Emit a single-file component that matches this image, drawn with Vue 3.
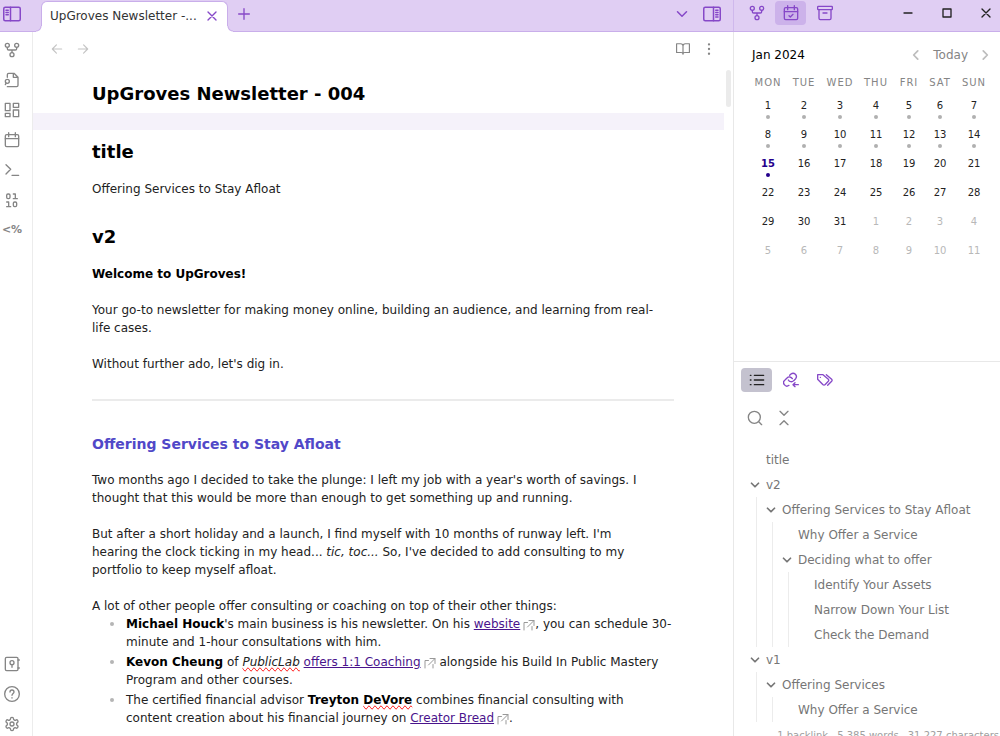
<script setup>
import { h } from 'vue'

const icons = {
  fork: '<circle cx="12" cy="19" r="3"/><circle cx="5" cy="5" r="3"/><circle cx="19" cy="5" r="3"/><path d="M19 8v2a2 2 0 0 1-2 2H7a2 2 0 0 1-2-2V8M12 12v4"/>',
  fileSearch: '<path d="M5 8V4a2 2 0 0 1 2-2h8l6 6v12a2 2 0 0 1-2 2H5M14 2v6h7"/><circle cx="5" cy="14" r="3"/><path d="m2 19 1-2"/>',
  dashboard: '<path d="M2 2h7v11H2zM14 2h8v6h-8zM14 12h8v10h-8zM2 17h7v5H2z"/>',
  calendar: '<rect x="2" y="4" width="20" height="18" rx="2"/><path d="M7 1v6M17 1v6M2 10h20"/>',
  terminal: '<path d="m3 18 7-7-7-7M12 20h10"/>',
  binary: '<rect x="4" y="3" width="5" height="7" rx="2"/><rect x="14" y="15" width="5" height="7" rx="2"/><path d="M4 22h6M14 10h6M4 15h3v7M14 3h3v7"/>',
  vault: '<rect x="2" y="2" width="19" height="20" rx="2"/><circle cx="12" cy="10" r="3"/><path d="M12 13v4M21 6h2M21 18h2"/>',
  help: '<circle cx="12" cy="12" r="11"/><path d="M9 9a3 3 0 0 1 6 0c0 2-3 2.500-3 5M12 17.500v.5"/>',
  settings: '<path d="M12.220 2h-.44a2 2 0 0 0-2 2v.18a2 2 0 0 1-1 1.730l-.43.25a2 2 0 0 1-2 0l-.15-.08a2 2 0 0 0-2.730.73l-.22.38a2 2 0 0 0 .73 2.730l.15.1a2 2 0 0 1 1 1.720v.51a2 2 0 0 1-1 1.740l-.15.09a2 2 0 0 0-.73 2.730l.22.38a2 2 0 0 0 2.730.73l.15-.08a2 2 0 0 1 2 0l.43.25a2 2 0 0 1 1 1.730V20a2 2 0 0 0 2 2h.44a2 2 0 0 0 2-2v-.18a2 2 0 0 1 1-1.730l.43-.25a2 2 0 0 1 2 0l.15.08a2 2 0 0 0 2.730-.73l.22-.39a2 2 0 0 0-.73-2.730l-.15-.08a2 2 0 0 1-1-1.740v-.5a2 2 0 0 1 1-1.740l.15-.09a2 2 0 0 0 .73-2.730l-.22-.38a2 2 0 0 0-2.730-.73l-.15.08a2 2 0 0 1-2 0l-.43-.25a2 2 0 0 1-1-1.730V4a2 2 0 0 0-2-2z"/><circle cx="12" cy="12" r="3"/>',
  sidebarLeft: '<rect x="1" y="3" width="22" height="18" rx="2"/><path d="M10 3v18M4 7h3M4 10h3M4 13h3"/>',
  sidebarRight: '<rect x="1" y="3" width="22" height="18" rx="2"/><path d="M14 3v18M17 7h3M17 10h3M17 13h3M17 16h3"/>',
  close: '<path d="M18 6 6 18M6 6l12 12"/>',
  plus: '<path d="M12 4v16M4 12h16"/>',
  down: '<path d="m6 9 6 6 6-6"/>',
  left: '<path d="m15 5-7 7 7 7"/>',
  right: '<path d="m9 5 7 7-7 7"/>',
  calendarCheck: '<rect x="2" y="4" width="20" height="18" rx="2"/><path d="M7 1v6M17 1v6M2 10h20M9 16l2 2 4-4"/>',
  archive: '<rect x="1" y="2" width="22" height="5" rx="1"/><path d="M3 7v13a2 2 0 0 0 2 2h14a2 2 0 0 0 2-2V7M9 12h6"/>',
  back: '<path d="M20 12H4M11 5l-7 7 7 7"/>',
  forward: '<path d="M4 12h16M13 5l7 7-7 7"/>',
  book: '<path d="M1 3h7a4 4 0 0 1 4 4v14a3 3 0 0 0-3-3H1zM23 3h-7a4 4 0 0 0-4 4v14a3 3 0 0 1 3-3h8z"/>',
  more: '<circle cx="12" cy="4" r="1"/><circle cx="12" cy="12" r="1"/><circle cx="12" cy="20" r="1"/>',
  minimize: '<path d="M6 12h12"/>',
  maximize: '<path d="M6 6h12v12H6z"/>',
  list: '<path d="M8 5h14M8 12h14M8 19h14M2 5h1M2 12h1M2 19h1"/>',
  backlink: '<path d="M8 12a5 5 0 0 0 8 1l3-3a5 5 0 0 0-7-7l-2 2"/><path d="M14 10a5 5 0 0 0-8-1l-3 3a5 5 0 0 0 6 8M23 19h-8M18 16l-3 3 3 3"/>',
  tags: '<path d="M1 4v7l8 8a2 2 0 0 0 3 0l5-5a2 2 0 0 0 0-3L9 4zM14 4l8 7a2 2 0 0 1 0 3l-6 6M5 8h.1"/>',
  search: '<circle cx="11" cy="11" r="9"/><path d="m22 22-4-4"/>',
  collapse: '<path d="m6 2 6 6 6-6M6 22l6-6 6 6"/>',
  external: '<path d="M9 7H2v15M18 15v7M12 3h10v10M22 3 9 16"/>',
}

const Icon = (props) => h('svg', {
  viewBox: '0 0 24 24', width: props.size || 16, height: props.size || 16, fill: 'none',
  stroke: 'currentColor', 'stroke-width': props.weight || 2, 'stroke-linecap': 'round',
  'stroke-linejoin': 'round', 'aria-hidden': 'true', innerHTML: icons[props.name],
})
Icon.props = ['name', 'size', 'weight']

const ribbon = [
  ['fork', 'Open graph view'], ['fileSearch', 'Open quick switcher'], ['dashboard', 'Create new canvas'],
  ['calendar', "Open today's daily note"], ['terminal', 'Open command palette'], ['binary', 'Binary'],
]
const ribbonBottom = [['vault', 'Open another vault'], ['help', 'Help'], ['settings', 'Settings']]

const dayNames = ['MON', 'TUE', 'WED', 'THU', 'FRI', 'SAT', 'SUN']
const colWidths = ['c36', 'c36', 'c36', 'c36', 'c30', 'c32', 'c36']
const weeks = Array.from({ length: 6 }, (_, w) => Array.from({ length: 7 }, (_, d) => {
  const n = w * 7 + d + 1
  return { n: n > 31 ? n - 31 : n, other: n > 31, today: n === 15, dot: n <= 15 }
}))

const outline = [
  { t: 'title' },
  { t: 'v2', c: [
    { t: 'Offering Services to Stay Afloat', c: [
      { t: 'Why Offer a Service' },
      { t: 'Deciding what to offer', c: [
        { t: 'Identify Your Assets' }, { t: 'Narrow Down Your List' }, { t: 'Check the Demand' },
      ] },
    ] },
  ] },
  { t: 'v1', c: [{ t: 'Offering Services', c: [{ t: 'Why Offer a Service' }] }] },
]

const Tree = (props) => h('ul', { class: 'tree' }, props.items.map((i) => h('li', [
  h('button', { class: 'node', type: 'button' }, [
    h('span', { class: 'fold' }, i.c ? [h(Icon, { name: 'down', size: 14, weight: 3 })] : []),
    i.t,
  ]),
  i.c ? h(Tree, { items: i.c }) : null,
])))
Tree.props = ['items']
</script>

<template>
  <div class="window">
    <header class="titlebar">
      <div class="bar-main">
        <button class="sidebar-toggle" aria-label="Toggle left sidebar"><Icon name="sidebarLeft" size="18" /></button>
        <div class="tab">
          <span class="tab-title">UpGroves Newsletter -...</span>
          <button aria-label="Close tab"><Icon name="close" size="16" /></button>
        </div>
        <button class="new-tab" aria-label="New tab"><Icon name="plus" /></button>
        <div class="bar-end">
          <button aria-label="Tab list"><Icon name="down" size="18" /></button>
          <button aria-label="Toggle right sidebar"><Icon name="sidebarRight" size="18" /></button>
        </div>
      </div>
      <div class="bar-side">
        <div class="side-tabs">
          <button class="side-tab" aria-label="Graph"><Icon name="fork" /></button>
          <button class="side-tab on" aria-label="Calendar"><Icon name="calendarCheck" /></button>
          <button class="side-tab" aria-label="Archive"><Icon name="archive" /></button>
        </div>
        <div class="controls">
          <button aria-label="Minimize"><Icon name="minimize" /></button>
          <button aria-label="Maximize"><Icon name="maximize" /></button>
          <button aria-label="Close"><Icon name="close" /></button>
        </div>
      </div>
    </header>

    <nav class="ribbon" aria-label="Ribbon">
      <button v-for="r in ribbon" :key="r[0]" :aria-label="r[1]"><Icon :name="r[0]" /></button>
      <button class="templater">&lt;%</button>
      <span class="spacer"></span>
      <button v-for="r in ribbonBottom" :key="r[0]" :aria-label="r[1]"><Icon :name="r[0]" /></button>
    </nav>

    <main class="editor">
      <div class="view-header">
        <button aria-label="Back" class="faint"><Icon name="back" size="14" /></button>
        <button aria-label="Forward" class="faint"><Icon name="forward" size="14" /></button>
        <span class="spacer"></span>
        <button aria-label="Reading view"><Icon name="book" size="14" /></button>
        <button aria-label="More options"><Icon name="more" size="14" /></button>
      </div>
      <article>
        <h1>UpGroves Newsletter - 004</h1>
        <div class="active-line"></div>
        <h2>title</h2>
        <p>Offering Services to Stay Afloat</p>
        <h2 class="later">v2</h2>
        <p><strong>Welcome to UpGroves!</strong></p>
        <p>Your go-to newsletter for making money online, building an audience, and learning from real-<br>life cases.</p>
        <p>Without further ado, let's dig in.</p>
        <hr>
        <h3>Offering Services to Stay Afloat</h3>
        <p>Two months ago I decided to take the plunge: I left my job with a year's worth of savings. I<br>thought that this would be more than enough to get something up and running.</p>
        <p>But after a short holiday and a launch, I find myself with 10 months of runway left. I'm<br>hearing the clock ticking in my head... <em>tic, toc...</em> So, I've decided to add consulting to my<br>portfolio to keep myself afloat.</p>
        <p>A lot of other people offer consulting or coaching on top of their other things:</p>
        <ul class="people">
          <li><strong>Michael Houck</strong>'s main business is his newsletter. On his <a href="#">website</a><Icon name="external" size="12" class="ext" />, you can schedule 30-<wbr>minute and 1-hour consultations with him.</li>
          <li><strong>Kevon Cheung</strong> of <em class="typo">PublicLab</em> <a href="#">offers 1:1 Coaching</a><Icon name="external" size="12" class="ext" /> alongside his Build In Public Mastery Program and other courses.</li>
          <li>The certified financial advisor <strong>Treyton <span class="typo">DeVore</span></strong> combines financial consulting with<br>content creation about his financial journey on <a href="#">Creator Bread</a><Icon name="external" size="12" class="ext" />.</li>
        </ul>
      </article>
      <div class="thumb"></div>
    </main>

    <aside class="side">
      <section class="calendar">
        <div class="month">
          <span class="month-name">Jan 2024</span>
          <button aria-label="Previous month" class="arrow"><Icon name="left" size="14" weight="3" /></button>
          <button class="today-btn">Today</button>
          <button aria-label="Next month" class="arrow"><Icon name="right" size="14" weight="3" /></button>
        </div>
        <table>
          <colgroup><col v-for="(c, i) in colWidths" :key="i" :class="c"></colgroup>
          <thead><tr><th v-for="d in dayNames" :key="d" scope="col">{{ d }}</th></tr></thead>
          <tbody>
            <tr v-for="(w, i) in weeks" :key="i">
              <td v-for="d in w" :key="d.n" :class="{ other: d.other, today: d.today }">
                <span class="num">{{ d.n }}</span><span class="dot" :class="{ shown: d.dot }"></span>
              </td>
            </tr>
          </tbody>
        </table>
      </section>
      <section class="outline">
        <div class="side-tabs">
          <button class="side-tab grey" aria-label="Outline"><Icon name="list" /></button>
          <button class="side-tab" aria-label="Backlinks"><Icon name="backlink" /></button>
          <button class="side-tab" aria-label="Tags"><Icon name="tags" /></button>
        </div>
        <div class="tools">
          <button aria-label="Search"><Icon name="search" /></button>
          <button aria-label="Collapse all"><Icon name="collapse" /></button>
        </div>
        <Tree :items="outline" />
        <div class="thumb"></div>
      </section>
    </aside>
    <footer class="status"><span>1 backlink</span><span>5,385 words</span><span>31,227 characters</span></footer>
  </div>
</template>

<style>
html, body { margin: 0; overflow: hidden; }
</style>

<style scoped>
.window {
  position: relative;
  display: grid;
  grid-template: 32px minmax(0, 1fr) / 33px minmax(0, 1fr) 266px;
  height: 100vh;
  overflow: hidden;
  background: #fff;
  color: #222;
  font: 12px/18px "DejaVu Sans", Verdana, sans-serif;
}
.window :deep(button) {
  display: flex;
  align-items: center;
  justify-content: center;
  padding: 0;
  border: 0;
  background: none;
  color: inherit;
  font: inherit;
}
.window :deep(svg) { flex: none; }
.spacer { flex: 1; }

.titlebar {
  grid-column: 1 / -1;
  display: grid;
  grid-template-columns: minmax(0, 1fr) 267px;
  box-sizing: border-box;
  background: #e0cef3;
  border-bottom: 1px solid #c9aeea;
  color: #8648c8;
}
.bar-main { display: flex; align-items: flex-start; }
.sidebar-toggle { width: 24px; height: 28px; }
.tab {
  position: relative;
  align-self: flex-end;
  display: flex;
  align-items: center;
  justify-content: space-between;
  box-sizing: border-box;
  width: 187px;
  height: 31px;
  margin: 0 8px -1px 17px;
  padding: 0 7px 2px 8px;
  background: #fff;
  border: 1px solid #c9aeea;
  border-bottom: 0;
  border-radius: 6px 6px 0 0;
}
.tab::before, .tab::after {
  content: "";
  position: absolute;
  bottom: 0;
  width: 6px;
  height: 6px;
}
.tab::before { left: -6px; background: radial-gradient(circle at 0 0, #e0cef3 4px, #c9aeea 5px, #fff 6px); }
.tab::after { right: -6px; background: radial-gradient(circle at 100% 0, #e0cef3 4px, #c9aeea 5px, #fff 6px); }
.tab-title { color: #333; white-space: nowrap; }
.new-tab { height: 28px; }
.bar-end { display: flex; gap: 12px; margin-left: auto; padding-right: 12px; height: 28px; }
.bar-side {
  display: flex;
  align-items: flex-start;
  justify-content: space-between;
  border-left: 1px solid #cfb8ec;
  padding: 1px 6px 0 7px;
}
.side-tabs { display: flex; gap: 3px; color: #8648c8; }
.side-tab { width: 31px; height: 24px; border-radius: 4px; }
.window .side-tab.on { background: #ccb2ea; }
.window .side-tab.grey { background: #c4c2cf; color: #222; }
.controls { display: flex; gap: 23px; height: 24px; color: #222; }

.ribbon {
  display: flex;
  flex-direction: column;
  gap: 6px;
  box-sizing: border-box;
  padding: 6px 9px 0 0;
  border-right: 1px solid #ececec;
  color: #858585;
}
.ribbon button { height: 24px; width: 24px; }
.ribbon .templater { font-size: 11px; font-weight: bold; }

.editor { position: relative; overflow: hidden; border-right: 1px solid #e8e8e8; }
.view-header {
  display: flex;
  align-items: center;
  gap: 12px;
  height: 34px;
  padding: 0 17px;
  color: #858585;
}
.view-header .faint { color: #c4c4c4; }
article { padding: 16px 59px 0 59px; }
h1, h2, h3, p, hr, ul { margin: 0; }
h1, h2 { font-size: 18px; line-height: 24px; color: #000; }
.active-line { height: 17px; margin: 7px -50px 10px -59px; background: #f5f2fa; }
h2 { margin-bottom: 16px; }
h2.later { margin-top: 27px; }
p + p { margin-top: 18px; }
strong { color: #000; }
hr { border: 0; height: 2px; margin: 26px 0 32px; background: #ebebeb; }
h3 { margin-bottom: 16px; font-size: 14px; line-height: 22px; color: #5148c8; }
.people { padding: 0 0 0 34px; list-style: none; }
.people li { position: relative; padding: 0 0 2px; }
.people li::before {
  content: "";
  position: absolute;
  left: -16px;
  top: 7px;
  width: 4px;
  height: 4px;
  border-radius: 50%;
  background: #b5b5b5;
}
a { color: #4a148c; }
.typo { text-decoration: spelling-error; }
.ext { margin-left: 3px; vertical-align: -3px; color: #999; }
.thumb { position: absolute; border-radius: 3px; background: #ebebeb; }
.editor .thumb { top: 38px; right: 2px; width: 5px; height: 37px; }

.side { display: grid; grid-template-rows: 329px minmax(0, 1fr); min-height: 0; background: #fff; }
.calendar { padding: 13px 9px 0 16px; }
.month { display: flex; align-items: center; height: 20px; }
.month-name { flex: 1; color: #000; padding-left: 2px; }
.month .today-btn { color: #858585; margin: 0 10px; }
.month .arrow { color: #bdbdbd; }
table { width: 100%; table-layout: fixed; border-collapse: collapse; font-size: 10px; line-height: 12px; }
.c36 { width: 36px; }
.c30 { width: 30px; }
.c32 { width: 32px; }
th { padding: 8px 0 0; height: 20px; font-weight: normal; letter-spacing: 1px; color: #858585; }
td { height: 29px; padding: 0; text-align: center; vertical-align: middle; }
.num { display: block; padding-top: 3px; }
.dot { display: block; width: 4px; height: 4px; margin: 3px auto 0; border-radius: 50%; }
.dot.shown { background: #b0b0b0; }
.other { color: #b8b8b8; }
.today { color: #24008c; font-weight: bold; }
.today .dot { background: #24008c; }

.outline { position: relative; overflow: hidden; border-top: 1px solid #e8e8e8; padding: 6px 7px 0; }
.tools { display: flex; gap: 13px; padding: 18px 6px 21px; color: #858585; }
.outline .thumb { top: 78px; right: 0; width: 1px; height: 151px; }
.outline :deep(.tree) { margin: 0; padding: 0 0 0 7px; list-style: none; color: #767676; }
.outline :deep(.tree .tree) { margin-left: 8px; border-left: 1px solid #ececec; }
.outline :deep(.node) { height: 25px; white-space: nowrap; }
.outline :deep(.fold) { display: flex; width: 18px; }

.status {
  position: absolute;
  right: 1px;
  bottom: -7px;
  display: flex;
  gap: 9px;
  font-size: 10px;
  line-height: 14px;
  color: #a0a0a0;
  white-space: nowrap;
}
</style>
